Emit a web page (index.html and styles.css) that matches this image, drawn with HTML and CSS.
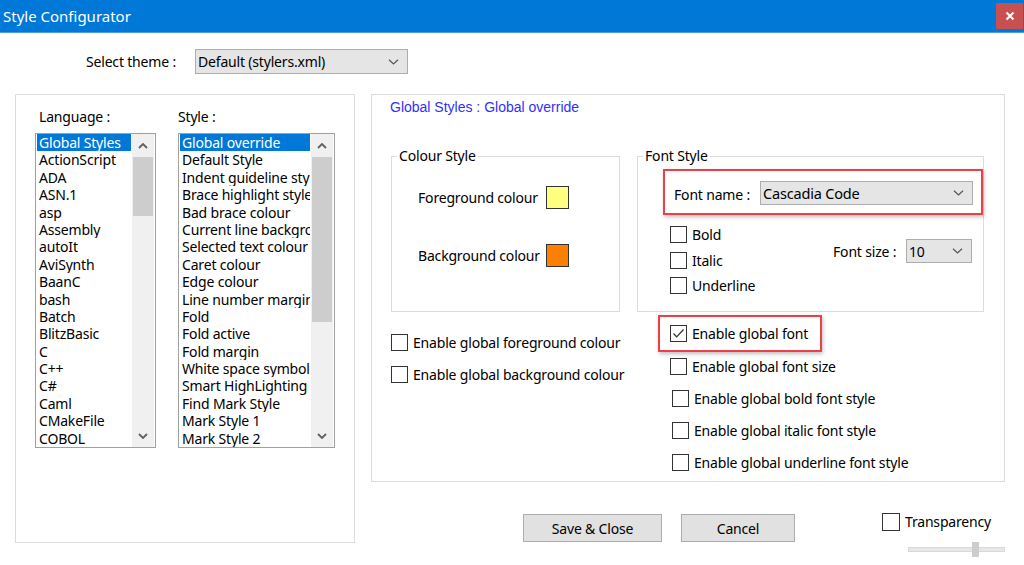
FILE: index.html
```html
<!DOCTYPE html>
<html lang="en">
<head>
  <meta charset="UTF-8" />
  <title>Style Configurator</title>
  <link rel="stylesheet" href="styles.css">
</head>
<body>
  <div class="window">

    <div class="titlebar">
      <span class="title">Style Configurator</span>
      <span class="close">
        <svg width="10" height="10" viewBox="0 0 10 10"><path d="M1.5 1.5l7 7M8.5 1.5l-7 7" stroke="#fff" stroke-width="2"/></svg>
      </span>
    </div>

    <div class="theme-row">
      <span class="theme-label">Select theme :</span>
      <div class="combo combo-theme">
        <span>Default (stylers.xml)</span>
        <svg class="chev" width="11" height="6" viewBox="0 0 11 6"><path d="M1 0.8l4.5 4.2 4.5-4.2" fill="none" stroke="#555" stroke-width="1.2"/></svg>
      </div>
    </div>

    <div class="content">

      <section class="panel-left">
        <div class="list-col">
          <div class="list-label lang-label">Language :</div>
          <div class="listbox lang-list">
            <ul class="items">
              <li class="selected">Global Styles</li>
              <li>ActionScript</li>
              <li>ADA</li>
              <li>ASN.1</li>
              <li>asp</li>
              <li>Assembly</li>
              <li>autoIt</li>
              <li>AviSynth</li>
              <li>BaanC</li>
              <li>bash</li>
              <li>Batch</li>
              <li>BlitzBasic</li>
              <li>C</li>
              <li>C++</li>
              <li>C#</li>
              <li>Caml</li>
              <li>CMakeFile</li>
              <li>COBOL</li>
            </ul>
            <div class="scrollbar">
              <span class="arrow"><svg width="10" height="6" viewBox="0 0 10 6"><path d="M1 5l4-4 4 4" fill="none" stroke="#606060" stroke-width="1.8"/></svg></span>
              <span class="track"><span class="thumb lang-thumb"></span></span>
              <span class="arrow"><svg width="10" height="6" viewBox="0 0 10 6"><path d="M1 1l4 4 4-4" fill="none" stroke="#606060" stroke-width="1.8"/></svg></span>
            </div>
          </div>
        </div>

        <div class="list-col">
          <div class="list-label">Style :</div>
          <div class="listbox style-list">
            <ul class="items">
              <li class="selected">Global override</li>
              <li>Default Style</li>
              <li>Indent guideline style</li>
              <li>Brace highlight style</li>
              <li>Bad brace colour</li>
              <li>Current line background colour</li>
              <li>Selected text colour</li>
              <li>Caret colour</li>
              <li>Edge colour</li>
              <li>Line number margin</li>
              <li>Fold</li>
              <li>Fold active</li>
              <li>Fold margin</li>
              <li>White space symbol</li>
              <li>Smart HighLighting</li>
              <li>Find Mark Style</li>
              <li>Mark Style 1</li>
              <li>Mark Style 2</li>
            </ul>
            <div class="scrollbar">
              <span class="arrow"><svg width="10" height="6" viewBox="0 0 10 6"><path d="M1 5l4-4 4 4" fill="none" stroke="#606060" stroke-width="1.8"/></svg></span>
              <span class="track"><span class="thumb style-thumb"></span></span>
              <span class="arrow"><svg width="10" height="6" viewBox="0 0 10 6"><path d="M1 1l4 4 4-4" fill="none" stroke="#606060" stroke-width="1.8"/></svg></span>
            </div>
          </div>
        </div>
      </section>

      <div class="right-col">
        <section class="panel-right">
          <div class="heading">Global Styles : Global override</div>

          <div class="groups">
            <fieldset class="group colour-group">
              <legend>Colour Style</legend>
              <div class="colour-grid">
                <span>Foreground colour</span>
                <span class="swatch fg"></span>
                <span>Background colour</span>
                <span class="swatch bg"></span>
              </div>
            </fieldset>

            <fieldset class="group font-group">
              <legend>Font Style</legend>
              <div class="mark font-name">
                <span class="font-name-label">Font name :</span>
                <div class="combo combo-font">
                  <span>Cascadia Code</span>
                  <svg class="chev" width="11" height="6" viewBox="0 0 11 6"><path d="M1 0.8l4.5 4.2 4.5-4.2" fill="none" stroke="#555" stroke-width="1.2"/></svg>
                </div>
              </div>
              <div class="font-opts">
                <div class="font-checks">
                  <div class="check-row"><span class="check"></span><span>Bold</span></div>
                  <div class="check-row"><span class="check"></span><span>Italic</span></div>
                  <div class="check-row"><span class="check"></span><span>Underline</span></div>
                </div>
                <div class="font-size">
                  <span>Font size :</span>
                  <div class="combo combo-size">
                    <span>10</span>
                    <svg class="chev" width="11" height="6" viewBox="0 0 11 6"><path d="M1 0.8l4.5 4.2 4.5-4.2" fill="none" stroke="#555" stroke-width="1.2"/></svg>
                  </div>
                </div>
              </div>
            </fieldset>
          </div>

          <div class="enables">
            <div class="enable-left">
              <div class="check-row"><span class="check"></span><span>Enable global foreground colour</span></div>
              <div class="check-row"><span class="check"></span><span>Enable global background colour</span></div>
            </div>
            <div class="enable-right">
              <div class="mark global-font">
                <div class="check-row">
                  <span class="check checked">
                    <svg width="15" height="15" viewBox="0 0 15 15"><path d="M2.5 7.5l3.2 3.4 6.8-7.4" fill="none" stroke="#333" stroke-width="1.3"/></svg>
                  </span>
                  <span>Enable global font</span>
                </div>
              </div>
              <div class="check-row first"><span class="check"></span><span>Enable global font size</span></div>
              <div class="check-row shifted"><span class="check"></span><span>Enable global bold font style</span></div>
              <div class="check-row shifted"><span class="check"></span><span>Enable global italic font style</span></div>
              <div class="check-row shifted"><span class="check"></span><span>Enable global underline font style</span></div>
            </div>
          </div>
        </section>

        <div class="actions">
          <button class="btn btn-save">Save &amp; Close</button>
          <button class="btn btn-cancel">Cancel</button>
          <div class="transparency">
            <div class="check-row"><span class="check"></span><span>Transparency</span></div>
            <div class="slider"><span class="slider-thumb"></span></div>
          </div>
        </div>
      </div>

    </div>
  </div>
</body>
</html>
```

FILE: styles.css
```css
* {
  margin: 0;
  padding: 0;
  box-sizing: border-box;
}

body {
  font-family: 'Noto Sans', 'Open Sans', sans-serif;
  font-size: 14px;
  letter-spacing: -0.18px;
  color: #000;
  background: #fff;
}

.window {
  width: 1024px;
  height: 565px;
  overflow: hidden;
  background: #fff;
}

/* title bar */

.titlebar {
  height: 33px;
  display: flex;
  align-items: flex-start;
  background: #0078d7;
  border-bottom: 1px solid #4a9de0;
}

.title {
  margin: 6px 0 0 3px;
  font-size: 15px;
  line-height: 20px;
  letter-spacing: 0;
  color: #fff;
}

.close {
  margin: 3px 1px 0 auto;
  width: 27px;
  height: 26px;
  display: flex;
  align-items: center;
  justify-content: center;
  background: #c75050;
}

/* theme selector */

.theme-row {
  display: flex;
  align-items: center;
  margin-top: 16px;
  padding-left: 86px;
  height: 25px;
}

.theme-label {
  width: 109px;
}

.combo {
  display: flex;
  align-items: center;
  justify-content: space-between;
  background: #e5e5e5;
  border: 1px solid #adadad;
  padding: 0 8px 0 2px;
  white-space: nowrap;
}

.combo-theme {
  width: 213px;
  height: 25px;
}

.content {
  display: flex;
  align-items: flex-start;
  margin-top: 20px;
  padding-left: 15px;
}

/* left panel: lists */

.panel-left {
  width: 340px;
  height: 449px;
  border: 1px solid #dcdcdc;
  display: flex;
  gap: 22px;
  padding: 12px 0 0 19px;
}

.list-label {
  line-height: 20px;
  margin-bottom: 6px;
}

.lang-label {
  padding-left: 4px;
}

.listbox {
  height: 315px;
  border: 1px solid #a0a0a0;
  display: flex;
  padding: 0 1px;
}

.lang-list {
  width: 121px;
}

.style-list {
  width: 157px;
}

.items {
  list-style: none;
  flex: 1;
  min-width: 0;
  overflow: hidden;
  margin-right: 1px;
}

.items li {
  height: 17.4px;
  line-height: 18px;
  padding-left: 2px;
  white-space: nowrap;
  overflow: hidden;
}

.items li.selected {
  background: #0078d7;
  color: #fff;
}

.scrollbar {
  width: 22px;
  background: #f0f0f0;
  display: flex;
  flex-direction: column;
}

.arrow {
  height: 23px;
  display: flex;
  align-items: center;
  justify-content: center;
}

.track {
  flex: 1;
  padding: 0 1px;
}

.thumb {
  display: block;
  background: #cdcdcd;
}

.lang-thumb {
  height: 59px;
}

.style-thumb {
  height: 165px;
}

/* right panel */

.right-col {
  margin-left: 16px;
}

.panel-right {
  width: 634px;
  height: 388px;
  border: 1px solid #dcdcdc;
  padding: 2px 0 0 18px;
}

.heading {
  font-family: 'Liberation Sans', Arial, sans-serif;
  font-size: 14px;
  letter-spacing: 0;
  line-height: 20px;
  color: #2f2fff;
}

.groups {
  display: flex;
  gap: 17px;
  margin: 29px 0 0 1px;
}

.group {
  border: 1px solid #dcdcdc;
  margin: 0;
  padding: 0;
  min-width: 0;
  height: 166px;
}

.group legend {
  margin-left: 5px;
  padding: 0 2px;
  line-height: 20px;
}

.colour-group {
  width: 229px;
}

.colour-grid {
  display: grid;
  grid-template-columns: 128px 23px;
  row-gap: 35px;
  align-items: center;
  margin: 20px 0 0 26px;
}

.swatch {
  width: 23px;
  height: 23px;
  border: 1px solid #333;
}

.swatch.fg {
  background: #ffff80;
}

.swatch.bg {
  background: #ff8000;
}

.font-group {
  width: 347px;
}

/* red annotation boxes */

.mark {
  border: 2px solid #ec3f48;
  box-shadow: 1px 2px 4px rgba(0, 0, 0, 0.25);
}

.font-name {
  width: 320px;
  height: 46px;
  margin: 3px 0 0 25px;
  display: flex;
  align-items: flex-start;
  padding: 10px 0 0 9px;
}

.font-name-label {
  width: 86px;
  margin-top: 4px;
  line-height: 20px;
}

.combo-font {
  width: 213px;
  height: 24px;
  font-size: 14.5px;
}

.font-opts {
  display: flex;
  align-items: flex-start;
  margin: 11px 11px 0 32px;
}

.font-checks {
  display: flex;
  flex-direction: column;
  gap: 8.5px;
}

.font-size {
  margin: 13px 0 0 auto;
  display: flex;
  align-items: center;
}

.font-size > span {
  width: 73px;
}

.combo-size {
  width: 66px;
  height: 24px;
}

/* checkboxes */

.check-row {
  display: flex;
  align-items: center;
  height: 17px;
  gap: 5px;
  white-space: nowrap;
}

.check {
  width: 17px;
  height: 17px;
  flex: none;
  border: 1px solid #333;
  background: #fff;
  display: flex;
  align-items: center;
  justify-content: center;
}

.enables {
  display: flex;
  margin-top: 3px;
}

.enable-left {
  width: 267px;
  margin-left: 1px;
  padding-top: 19px;
  display: flex;
  flex-direction: column;
  gap: 15px;
}

.enable-right {
  display: flex;
  flex-direction: column;
}

.global-font {
  width: 164px;
  height: 37px;
  padding: 8px 0 0 10px;
}

.enable-right .check-row.first {
  margin: 6px 0 0 12px;
}

.enable-right .check-row.shifted {
  margin: 15px 0 0 14px;
}

/* bottom actions */

.actions {
  display: flex;
  align-items: flex-start;
  gap: 19px;
  margin-top: 32px;
  padding-left: 152px;
}

.btn {
  height: 28px;
  font-family: inherit;
  font-size: 14px;
  letter-spacing: -0.18px;
  color: #000;
  background: #e1e1e1;
  border: 1px solid #adadad;
}

.btn-save {
  width: 139px;
}

.btn-cancel {
  width: 114px;
}

.transparency {
  margin: -1px 0 0 68px;
}

.transparency .check {
  width: 18px;
  height: 18px;
}

.slider {
  position: relative;
  width: 97px;
  height: 5px;
  margin: 17px 0 0 26px;
  background: #e7e7e7;
  border: 1px solid #d9d9d9;
}

.slider-thumb {
  position: absolute;
  left: 63px;
  top: -6px;
  width: 7px;
  height: 15px;
  background: #cdcdcd;
}
```
